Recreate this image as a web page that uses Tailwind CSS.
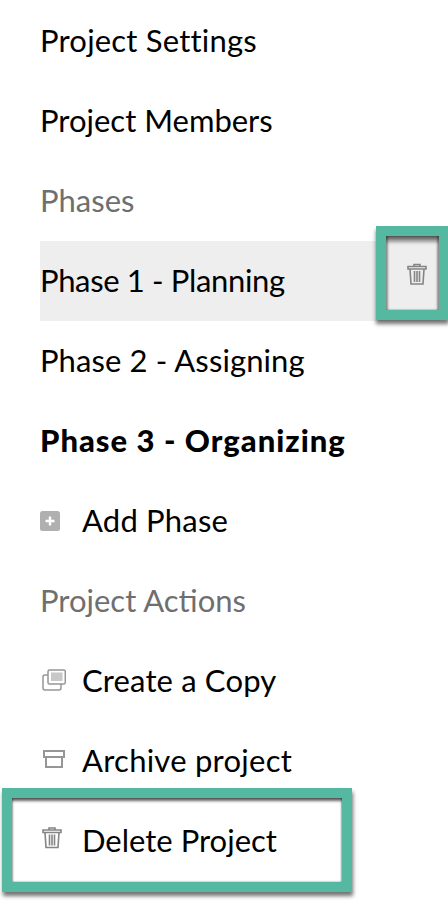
<!DOCTYPE html>
<html><head><meta charset="utf-8"><script src="https://cdn.jsdelivr.net/npm/@tailwindcss/browser@4"></script></head>
<body class="bg-white">
<div class="relative w-[448px] h-[904px] overflow-hidden bg-white font-['Lato','Liberation_Sans',sans-serif] text-[31px] text-black">
<div class="pl-10 flex flex-col">
<div class="h-20 flex items-center tracking-[0.2px]">Project Settings</div>
<div class="h-20 flex items-center">Project Members</div>
<div class="h-20 flex items-center text-[#6f6f6f]">Phases</div>
<div class="h-20 flex items-center justify-between bg-[#eeeeee] w-[400px] pr-[13px] mt-px"><span class="tracking-[-0.35px] mt-[-2px]">Phase 1 - Planning</span>
<svg class="w-5 h-[22px] mt-[-14px]" viewBox="0 0 20 22" fill="none" stroke="#858585" stroke-width="1.6"><path d="M7 3V1.500h6V3M1 3.500h18V6H1zM3 6l1 15h12l1-15M7.500 8v11M10 8v11M12.500 8v11"/></svg></div>
<div class="h-20 flex items-center tracking-[0.1px] mt-[-1px]">Phase 2 - Assigning</div>
<div class="h-20 flex items-center font-black tracking-[1px]">Phase 3 - Organizing</div>
<div class="h-20 flex items-center gap-[22px]"><svg class="w-5 h-5 mt-[2px]" viewBox="0 0 20 20"><rect width="20" height="20" rx="2.500" fill="#b0b0b0"/><path d="M10 5.500v9M5.500 10h9" stroke="#fff" stroke-width="2.400"/></svg><span class="tracking-[0.2px]">Add Phase</span></div>
<div class="h-20 flex items-center text-[#6f6f6f]">Project Actions</div>
<div class="h-20 flex items-center gap-[16px] pl-[2px]"><svg class="w-6 h-[22px]" viewBox="0 0 24 22" fill="none" stroke="#969696" stroke-width="1.500"><rect x="1" y="6" width="18" height="15" rx="2"/><rect x="6" y="1" width="17.300" height="14" rx="1.500" fill="#fff"/><rect x="9" y="3.500" width="11.500" height="8.500" fill="#c8c8c8" stroke="none"/></svg><span class="tracking-[0.15px]">Create a Copy</span></div>
<div class="h-20 flex items-center gap-[17px] pl-[3px]"><svg class="w-[22px] h-[18px] mt-[-3px]" viewBox="0 0 22 18" fill="none" stroke="#969696" stroke-width="2"><path d="M1 1h20v6H1zM3 7v10h16V7"/></svg><span class="tracking-[0.25px]">Archive project</span></div>
<div class="h-20 flex items-center gap-[20px] pl-[2px]"><svg class="w-5 h-[23px] mt-[-5px]" viewBox="0 0 20 22" fill="none" stroke="#858585" stroke-width="1.6"><path d="M7 3V1.500h6V3M1 3.500h18V6H1zM3 6l1 15h12l1-15M7.500 8v11M10 8v11M12.500 8v11"/></svg><span>Delete Project</span></div>
</div>
<div class="absolute left-[376px] top-[226px] w-[73px] h-[94px] border-[10px] border-[#55b8a1] shadow-[0_4px_4px_rgba(0,0,0,0.55),inset_0_6px_4px_-1px_rgba(0,0,0,0.6),inset_2px_0_2px_rgba(0,0,0,0.3),inset_-2px_0_2px_rgba(0,0,0,0.3)]"></div>
<div class="absolute left-[2px] top-[788px] w-[350px] h-[104px] border-[10px] border-[#55b8a1] shadow-[1px_4px_4px_rgba(0,0,0,0.55),inset_0_4px_3px_-1px_rgba(0,0,0,0.6),inset_1px_0_2px_rgba(0,0,0,0.3),inset_-1px_0_2px_rgba(0,0,0,0.3)]"></div>
</div>
</body></html>
